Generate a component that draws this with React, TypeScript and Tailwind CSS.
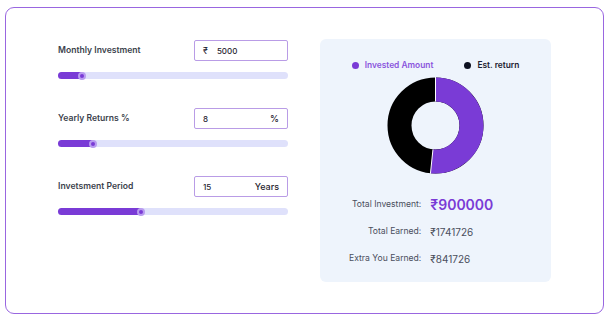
import React from 'react'

const font = { fontFamily: 'Inter, "Noto Sans", sans-serif' }

interface SliderProps {
    pct: number
}
function Slider({ pct }: SliderProps) {
    return (
        <div className="relative h-[7px] w-[230px] rounded-full bg-[#dfe1fb]">
            <div
                className="absolute left-0 top-0 h-[7px] rounded-full bg-[#7a3bd6]"
                style={{ width: `${pct}px` }}
            />
            <div
                className="absolute top-[-0.5px] h-[8px] w-[8px] rounded-full border-2 border-[#b99cf0] bg-[#7a3bd6]"
                style={{ left: `${pct - 5}px` }}
            />
        </div>
    )
}

interface RowProps {
    label: string
    prefix?: string
    value: string
    suffix?: string
    pct: number
}
function InputRow({ label, prefix, value, suffix, pct }: RowProps) {
    return (
        <div className="flex flex-col">
            <div className="flex items-center justify-between w-[230px]">
                <span className="text-[8.6px] font-semibold text-[#3b3f4c]">{label}</span>
                <div className="flex items-center h-[21px] w-[94px] rounded-[2px] border border-[#b99ce6] px-[8px] text-[8px] text-[#1f2330]">
                    {prefix && <span className="mr-[9px] text-[9px]">{prefix}</span>}
                    <span className="font-medium">{value}</span>
                    {suffix && (
                        <span className="ml-auto text-[9px] font-medium">{suffix}</span>
                    )}
                </div>
            </div>
            <div className="mt-[11px]">
                <Slider pct={pct} />
            </div>
        </div>
    )
}

function Donut() {
    const cx = 48.5
    const cy = 48.5
    const r = 36
    const frac = 900000 / 1741726
    const a = frac * Math.PI * 2
    const ex = cx + r * Math.sin(a)
    const ey = cy - r * Math.cos(a)
    const ox = cx + 48.5 * Math.sin(a)
    const oy = cy - 48.5 * Math.cos(a)
    const ix = cx + 24 * Math.sin(a)
    const iy = cy - 24 * Math.cos(a)
    return (
        <svg width="97" height="97" viewBox="0 0 97 97">
            <circle cx={cx} cy={cy} r={r} fill="none" stroke="#000" strokeWidth="24" />
            <path
                d={`M ${cx} ${cy - r} A ${r} ${r} 0 ${a > Math.PI ? 1 : 0} 1 ${ex} ${ey}`}
                fill="none"
                stroke="#7a3bd6"
                strokeWidth="24"
            />
            <line x1={cx} y1={0} x2={cx} y2={24.5} stroke="#fff" strokeWidth="1" />
            <line x1={ix} y1={iy} x2={ox} y2={oy} stroke="#fff" strokeWidth="1" />
        </svg>
    )
}

export default function App() {
    return (
        <div className="w-[609px] h-[320px] bg-white pt-[7px] px-[5px]" style={font}>
            <div className="flex h-[307px] rounded-[9px] border border-[#9966e0] pl-[52px] pt-[31px]">
                <div className="flex flex-col gap-[29px] pt-[1px]">
                    <InputRow label="Monthly Investment" prefix="₹" value="5000" pct={25} />
                    <InputRow label="Yearly Returns %" value="8" suffix="%" pct={36} />
                    <InputRow label="Invetsment Period" value="15" suffix="Years" pct={84} />
                </div>
                <div className="ml-[32px] flex h-[243px] w-[231px] flex-col items-center rounded-[6px] bg-[#eef4fc] pt-[20px]">
                    <div className="flex items-center text-[8.4px] font-semibold">
                        <span className="mr-[6px] h-[7px] w-[7px] rounded-full bg-[#7a3bd6]" />
                        <span className="text-[#8a55dd]">Invested Amount</span>
                        <span className="ml-[31px] mr-[6px] h-[7px] w-[7px] rounded-full bg-[#0d1020]" />
                        <span className="text-[#1c2030]">Est. return</span>
                    </div>
                    <div className="mt-[5px]">
                        <Donut />
                    </div>
                    <div className="mt-[22px] self-start ml-[29px] grid grid-cols-[auto_auto] items-center gap-x-[9px] gap-y-[9px] whitespace-nowrap text-[8.6px] text-[#4a4e5c]">
                        <span className="text-right">Total Investment:</span>
                        <span className="text-[14px] leading-[18px] font-semibold text-[#7a3bd6]">₹900000</span>
                        <span className="text-right">Total Earned:</span>
                        <span className="text-[10px] leading-[18px]">₹1741726</span>
                        <span className="text-right">Extra You Earned:</span>
                        <span className="text-[10px] leading-[18px]">₹841726</span>
                    </div>
                </div>
            </div>
        </div>
    )
}
